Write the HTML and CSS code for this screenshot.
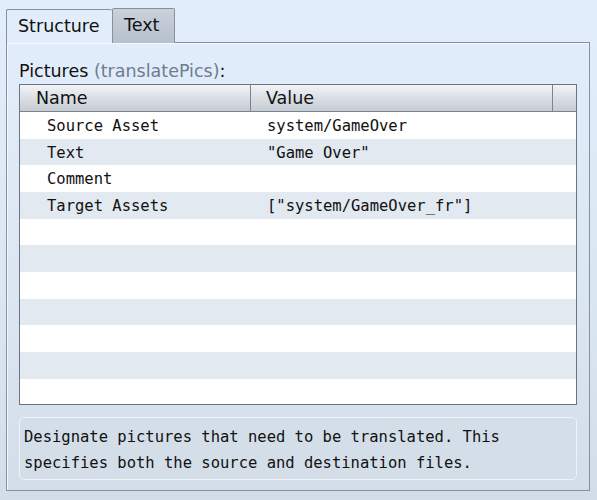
FILE: index.html
```html
<!DOCTYPE html>
<html lang="en">
<head>
    <meta charset="UTF-8">
    <title>Pictures</title>
    <link rel="stylesheet" href="styles.css">
</head>
<body>
    <div class="tabs">
        <div class="tab active">Structure</div>
        <div class="tab">Text</div>
    </div>

    <div class="panel">
        <div class="field-label">Pictures <span class="field-key">(translatePics)</span>:</div>

        <div class="grid">
            <div class="grid-head">
                <div class="col-name">Name</div>
                <div class="col-value">Value</div>
                <div class="col-end"></div>
            </div>
            <div class="row"><span class="cell-name">Source Asset</span><span class="cell-value">system/GameOver</span></div>
            <div class="row"><span class="cell-name">Text</span><span class="cell-value">"Game Over"</span></div>
            <div class="row"><span class="cell-name">Comment</span><span class="cell-value"></span></div>
            <div class="row"><span class="cell-name">Target Assets</span><span class="cell-value">["system/GameOver_fr"]</span></div>
            <div class="row"></div>
            <div class="row"></div>
            <div class="row"></div>
            <div class="row"></div>
            <div class="row"></div>
            <div class="row"></div>
            <div class="row"></div>
        </div>

        <div class="help">Designate pictures that need to be translated. This specifies both the source and destination files.</div>
    </div>
</body>
</html>
```

FILE: styles.css
```css
html, body {
    margin: 0;
    height: 100%;
}
body {
    font-family: "DejaVu Sans", sans-serif;
    font-size: 17.5px;
    color: #111;
    background: linear-gradient(to bottom, #e3eefc 0%, #dbe6f3 60%, #d3dde9 100%);
    overflow: hidden;
}

/* tab strip */
.tabs {
    display: flex;
    align-items: flex-end;
    padding: 8px 0 0 6px;
    height: 43px;
    box-sizing: border-box;
    position: relative;
    z-index: 1;
}
.tab {
    box-sizing: border-box;
    border: 1px solid #8a9098;
    border-bottom: none;
    border-radius: 2px 2px 0 0;
    background: linear-gradient(to bottom, #c9d1db, #b7bfca);
}
.tab.active {
    width: 106px;
    height: 34px;
    padding-left: 11px;
    line-height: 32px;
    background: #e2edfb;
    border-right: none;
}
.tab:not(.active) {
    width: 63px;
    height: 35px;
    padding-left: 11px;
    line-height: 33px;
}

.panel {
    margin: -1px 7px 0 6px;
    height: 449px;
    box-sizing: border-box;
    border: 1px solid #8a9098;
    box-shadow: inset 1px 1px 0 #f4f8fd;
    padding: 18px 12px 0 12px;
}

.field-label {
    height: 23px;
    line-height: 21px;
}
.field-key {
    color: #6c7d90;
}

/* property grid */
.grid {
    width: 558px;
    height: 321px;
    border: 1px solid #6d747c;
    box-sizing: border-box;
    background: #fff;
    overflow: hidden;
    font-family: "DejaVu Sans Mono", monospace;
    font-size: 15.5px;
}
.grid-head {
    display: flex;
    height: 26px;
    font-family: "DejaVu Sans", sans-serif;
    font-size: 17.5px;
    background: linear-gradient(to bottom, #f1f3f6, #d9dde3 55%, #c6ccd4);
    border-bottom: 1px solid #7d848c;
}
.grid-head > div {
    line-height: 27px;
    box-sizing: border-box;
}
.col-name {
    width: 231px;
    padding-left: 16px;
    border-right: 1px solid #7d848c;
}
.col-value {
    width: 302px;
    padding-left: 15px;
    border-right: 1px solid #7d848c;
}
.col-end {
    flex: 1;
}

.row {
    display: flex;
    height: 26.67px;
    line-height: 28px;
}
.row:nth-child(odd) {
    background: #e2e9f1;
}
.cell-name {
    width: 247px;
    padding-left: 27px;
    box-sizing: border-box;
}

.help {
    margin-top: 12px;
    width: 558px;
    height: 63px;
    box-sizing: border-box;
    border: 1px solid #eef3f9;
    border-radius: 5px;
    background: #d3dee9;
    padding: 6px 0 0 4px;
    font-family: "DejaVu Sans Mono", monospace;
    font-size: 15.5px;
    line-height: 26px;
}
```
